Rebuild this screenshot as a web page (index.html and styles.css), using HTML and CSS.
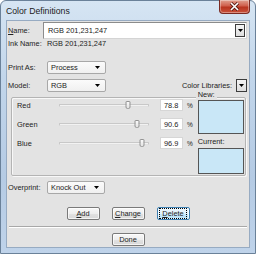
FILE: index.html
```html
<!DOCTYPE html>
<html lang="en">
  <head>
    <meta charset="UTF-8" />
    <title>Color Definitions</title>
    <link rel="stylesheet" href="styles.css">
  </head>
  <body>
    <div class="window">
      <!-- title bar -->
      <div class="titlebar">
        <span class="title">Color Definitions</span>
        <div class="close">
          <svg width="11" height="9" viewBox="0 0 11 9">
            <path d="M2 1 L9 8 M9 1 L2 8" stroke="#5a1d16" stroke-width="3.2" />
            <path d="M2 1 L9 8 M9 1 L2 8" stroke="#ffffff" stroke-width="1.6" />
          </svg>
        </div>
      </div>

      <div class="client">
        <div class="row name-row">
          <span class="lbl short"><u>N</u>ame:</span>
          <div class="combo-edit">
            <span>RGB 201,231,247</span>
            <span class="dropbtn">
              <svg width="5" height="3" viewBox="0 0 5 3"><path d="M0 0 H5 L2.5 3 Z" fill="#000" /></svg>
            </span>
          </div>
        </div>

        <div class="row ink-row">
          <span class="lbl">Ink Name:</span>
          <span>RGB 201,231,247</span>
        </div>

        <div class="row print-row">
          <span class="lbl">Print As:</span>
          <div class="select">
            <span>Process</span>
            <svg width="5" height="3" viewBox="0 0 5 3"><path d="M0 0 H5 L2.5 3 Z" fill="#000" /></svg>
          </div>
        </div>

        <div class="row model-row">
          <span class="lbl">Model:</span>
          <div class="select">
            <span>RGB</span>
            <svg width="5" height="3" viewBox="0 0 5 3"><path d="M0 0 H5 L2.5 3 Z" fill="#000" /></svg>
          </div>
          <span class="libs">Color Libraries:</span>
          <span class="dropbtn libbtn">
            <svg width="5" height="3" viewBox="0 0 5 3"><path d="M0 0 H5 L2.5 3 Z" fill="#000" /></svg>
          </span>
        </div>

        <!-- colour values -->
        <div class="group">
          <div class="channels">
            <div class="channel">
              <span class="ch-lbl">Red</span>
              <div class="slider"><div class="rail"><span class="thumb" style="left: 78.8%"></span></div></div>
              <div class="pct">78.8</div>
              <span class="unit">%</span>
            </div>
            <div class="channel">
              <span class="ch-lbl">Green</span>
              <div class="slider"><div class="rail"><span class="thumb" style="left: 90.6%"></span></div></div>
              <div class="pct">90.6</div>
              <span class="unit">%</span>
            </div>
            <div class="channel">
              <span class="ch-lbl">Blue</span>
              <div class="slider"><div class="rail"><span class="thumb" style="left: 96.9%"></span></div></div>
              <div class="pct">96.9</div>
              <span class="unit">%</span>
            </div>
          </div>
          <div class="preview">
            <span class="pv-lbl">New:</span>
            <div class="swatch new"></div>
            <span class="pv-lbl cur">Current:</span>
            <div class="swatch current"></div>
          </div>
        </div>

        <div class="row over-row">
          <span class="lbl">Overprint:</span>
          <div class="select">
            <span>Knock Out</span>
            <svg width="5" height="3" viewBox="0 0 5 3"><path d="M0 0 H5 L2.5 3 Z" fill="#000" /></svg>
          </div>
        </div>

        <div class="buttons actions">
          <button type="button"><u>A</u>dd</button>
          <button type="button"><u>C</u>hange</button>
          <button type="button" class="default"><span class="focus"><u>D</u>elete</span></button>
        </div>

        <div class="sep"></div>

        <div class="buttons done">
          <button type="button">Done</button>
        </div>
      </div>
    </div>
  </body>
</html>
```

FILE: styles.css
```css
* {
  box-sizing: border-box;
}

body {
  margin: 0;
  font-family: "Liberation Sans", Arial, sans-serif;
  font-size: 7.4px;
  color: #222222;
  background: #ffffff;
}

/* window frame */
.window {
  width: 256px;
  height: 254px;
  display: flex;
  flex-direction: column;
  padding: 0 5px 5px;
  border: 1px solid #6a8199;
  border-radius: 6px 6px 0 0;
  background: linear-gradient(#d6e5f3, #c2d6eb 30%, #b5cbe4 70%, #bfd3ea);
}

.titlebar {
  position: relative;
  height: 19px;
  display: flex;
  align-items: center;
}

.title {
  font-size: 8.7px;
  color: #1b1b1b;
}

.close {
  position: absolute;
  top: -1px;
  right: 0;
  width: 31px;
  height: 14px;
  display: flex;
  align-items: center;
  justify-content: center;
  border: 1px solid #7a2a22;
  border-top: none;
  border-radius: 0 0 4px 4px;
  background: linear-gradient(#e0a08f, #cf5f4c 45%, #b8341f 55%, #c9533c);
  box-shadow: inset 0 0 0 1px rgba(255, 255, 255, 0.35);
}

/* dialog body */
.client {
  flex: 1;
  display: flex;
  flex-direction: column;
  padding: 0 2px 0 1px;
  background: #e3e3e3;
  border: 1px solid #97abc2;
}

.row {
  display: flex;
  align-items: center;
}

.lbl {
  width: 39px;
  flex-shrink: 0;
}

.lbl.short {
  width: 35px;
}

.name-row {
  height: 18px;
}

.ink-row {
  height: 9px;
}

.print-row {
  height: 13px;
  margin-top: 13px;
}

.model-row {
  height: 13px;
  margin-top: 5px;
}

.over-row {
  height: 13px;
  margin-top: 5px;
}

.combo-edit {
  flex: 1;
  height: 17px;
  display: flex;
  align-items: center;
  justify-content: space-between;
  padding: 0 1px 0 4px;
  background: #ffffff;
  border: 1px solid #8c8c8c;
  border-right-color: #d4d4d4;
  border-bottom-color: #d4d4d4;
}

.dropbtn {
  width: 10px;
  height: 13px;
  display: flex;
  align-items: center;
  justify-content: center;
  background: linear-gradient(#f4f4f4, #dedede);
  border: 1px solid #3c3c3c;
}

.libs {
  margin-left: auto;
  margin-right: 4px;
}

.libbtn {
  width: 11px;
  height: 13px;
}

.select {
  width: 59px;
  height: 13px;
  display: flex;
  align-items: center;
  justify-content: space-between;
  padding: 0 5px 0 3px;
  background: linear-gradient(#fbfbfb, #f0f0f0);
  border: 1px solid #a8a8a8;
  border-radius: 2px;
}

.over-row .select {
  width: 58px;
}

/* RGB group */
.group {
  height: 79px;
  margin: 5px 1px 0 3px;
  display: flex;
  border: 1px solid #b4b4b4;
  border-radius: 2px;
  box-shadow: inset 1px 1px 0 #f8f8f8, 1px 1px 0 #f8f8f8;
}

.channels {
  display: flex;
  flex-direction: column;
  padding: 1px 0 0 5px;
}

.channel {
  height: 12px;
  margin-bottom: 7px;
  display: flex;
  align-items: center;
}

.ch-lbl {
  width: 42px;
}

.slider {
  position: relative;
  width: 90px;
  height: 3px;
  margin-right: 11px;
  background: #f2f2f2;
  border: 1px solid #c8c8c8;
  border-bottom-color: #e0e0e0;
  border-radius: 1px;
}

.rail {
  position: absolute;
  left: 3px;
  right: 3px;
  top: 0;
  bottom: 0;
}

.thumb {
  position: absolute;
  top: -4px;
  width: 5px;
  height: 8px;
  transform: translateX(-50%);
  background: linear-gradient(#fbfbfb, #e2e2e2);
  border: 1px solid #949494;
  border-radius: 1px 1px 2px 2px;
}

.pct {
  width: 23px;
  height: 12px;
  display: flex;
  align-items: center;
  padding-left: 3px;
  background: #ffffff;
  border: 1px solid #d6d6d6;
}

.unit {
  margin-left: 4px;
  font-size: 6.5px;
}

.preview {
  display: flex;
  flex-direction: column;
  width: 46px;
  margin: -8px 0 0 5px;
}

.pv-lbl {
  height: 9px;
  line-height: 9px;
  width: fit-content;
  margin-left: -2px;
  padding: 0 2px;
  background: #e3e3e3;
}

.pv-lbl.cur {
  margin-top: 3px;
  background: none;
}

.swatch {
  background: rgb(201, 231, 247);
  border: 1px solid #555555;
}

.swatch.new {
  height: 34px;
  margin-top: 1px;
}

.swatch.current {
  height: 26px;
  margin-top: 2px;
}

/* push buttons */
.buttons {
  display: flex;
  justify-content: center;
  gap: 12px;
  height: 13px;
  padding-left: 1px;
}

.actions {
  margin-top: 13px;
}

.done {
  margin-top: 5px;
}

button {
  width: 33px;
  height: 13px;
  padding: 0;
  font-family: inherit;
  font-size: 7.4px;
  color: #222222;
  background: linear-gradient(#f8f8f8, #eeeeee 50%, #e2e2e2 51%, #d8d8d8);
  border: 1px solid #7a7a7a;
  border-radius: 2px;
  box-shadow: inset 0 0 0 1px rgba(255, 255, 255, 0.7);
}

button.default {
  border-color: #3c7fb1;
  background: linear-gradient(#eef7fd, #e0f2fc 50%, #c9eafc 51%, #b6e0f6);
}

.focus {
  display: inline-block;
  padding: 0 2px;
  outline: 1px dotted #000000;
}

.sep {
  height: 2px;
  margin: 6px 0 0 1px;
  border-top: 1px solid #a8a8a8;
  border-bottom: 1px solid #ffffff;
}
```
